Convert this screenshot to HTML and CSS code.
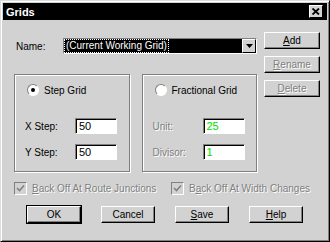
FILE: index.html
```html
<!DOCTYPE html>
<html lang="en">
  <head>
    <meta charset="utf-8" />
    <link rel="stylesheet" href="styles.css">
  </head>
  <body>
    <div class="window">
      <div class="titlebar">
        <span class="title">Grids</span>
        <button class="close">
          <svg width="8" height="7" viewBox="0 0 8 7"><path d="M0.5 0.5 L7 6.5 M7 0.5 L0.5 6.5" stroke="#000" stroke-width="1.8"/></svg>
        </button>
      </div>

      <div class="content">
        <div class="main">
          <div class="nameRow">
            <span class="nameLabel">Name:</span>
            <div class="combo">
              <div class="comboText"><span class="focus">(Current Working Grid)</span></div>
              <div class="comboBtn">
                <svg width="7" height="4" viewBox="0 0 7 4"><path d="M0 0 H7 L3.5 4 Z" fill="#000"/></svg>
              </div>
            </div>
          </div>

          <div class="groups">
            <div class="group">
              <div class="radioRow">
                <span class="radio checked"></span>
                <span>Step Grid</span>
              </div>
              <div class="field">
                <span class="fieldLabel">X Step:</span>
                <div class="input">50</div>
              </div>
              <div class="field">
                <span class="fieldLabel">Y Step:</span>
                <div class="input">50</div>
              </div>
            </div>
            <div class="group">
              <div class="radioRow">
                <span class="radio"></span>
                <span>Fractional Grid</span>
              </div>
              <div class="field">
                <span class="fieldLabel disabled">Unit:</span>
                <div class="input green">25</div>
              </div>
              <div class="field">
                <span class="fieldLabel disabled">Divisor:</span>
                <div class="input green">1</div>
              </div>
            </div>
          </div>
        </div>

        <div class="side">
          <button class="btn"><u>A</u>dd</button>
          <button class="btn disabled"><u>R</u>ename</button>
          <button class="btn disabled"><u>D</u>elete</button>
        </div>
      </div>

      <div class="checks">
        <div class="check first">
          <span class="box">
            <svg width="9" height="9" viewBox="0 0 9 9"><path d="M1 4 L3.5 6.5 L8 1.5" stroke="#808080" stroke-width="1.6" fill="none"/></svg>
          </span>
          <span class="disabled"><u>B</u>ack Off At Route Junctions</span>
        </div>
        <div class="check">
          <span class="box">
            <svg width="9" height="9" viewBox="0 0 9 9"><path d="M1 4 L3.5 6.5 L8 1.5" stroke="#808080" stroke-width="1.6" fill="none"/></svg>
          </span>
          <span class="disabled">B<u>a</u>ck Off At Width Changes</span>
        </div>
      </div>

      <div class="buttons">
        <button class="btn wide default">OK</button>
        <button class="btn wide">Cancel</button>
        <button class="btn wide"><u>S</u>ave</button>
        <button class="btn wide"><u>H</u>elp</button>
      </div>
    </div>
  </body>
</html>
```

FILE: styles.css
```css
body {
  margin: 0;
  font-family: "Liberation Sans", Arial, sans-serif;
  font-size: 10px;
  color: #000;
  background: #fff;
}

.window {
  width: 330px;
  height: 242px;
  box-sizing: border-box;
  border: 1px solid;
  border-color: #dcdcdc #000 #000 #dcdcdc;
  box-shadow: inset 1px 1px 0 #fff, inset -1px -1px 0 #808080;
  padding: 2px;
  background: #d2d2d2;
  overflow: hidden;
}

.titlebar {
  height: 17px;
  background: #000;
  display: flex;
  align-items: center;
  justify-content: space-between;
  padding: 0 4px 0 3px;
}
.title {
  color: #fff;
  font-weight: bold;
  font-size: 11px;
}
.close {
  width: 14px;
  height: 13px;
  padding: 0;
  margin: 0;
  display: flex;
  align-items: center;
  justify-content: center;
  background: #d2d2d2;
  border: 1px solid;
  border-color: #fff #000 #000 #fff;
}

.content {
  display: grid;
  grid-template-columns: 243px 56px;
  column-gap: 7px;
  padding: 12px 0 0 11px;
}

.nameRow {
  display: flex;
  align-items: center;
  margin-top: 6px;
  height: 16px;
}
.nameLabel {
  width: 47px;
  padding-left: 2px;
}
.combo {
  flex: 1;
  height: 16px;
  box-sizing: border-box;
  display: flex;
  border: 1px solid;
  border-color: #808080 #fff #fff #808080;
  background: #000;
}
.comboText {
  flex: 1;
  padding: 1px;
  display: flex;
  align-items: center;
}
.focus {
  color: #fff;
  outline: 1px dotted #fff;
  padding: 0 1px;
  line-height: 12px;
}
.comboBtn {
  width: 14px;
  box-sizing: border-box;
  background: #d2d2d2;
  border: 1px solid;
  border-color: #fff #000 #000 #fff;
  display: flex;
  align-items: center;
  justify-content: center;
}

.groups {
  display: flex;
  gap: 12px;
  margin-top: 20px;
}
.group {
  width: 116px;
  height: 98px;
  box-sizing: border-box;
  border: 1px solid #808080;
  box-shadow: 1px 1px 0 #fff, inset 1px 1px 0 #fff;
  padding: 9px 0 0 10px;
}
.radioRow {
  display: flex;
  align-items: center;
  gap: 5px;
  height: 12px;
  margin-left: 2px;
}
.radio {
  width: 10px;
  height: 10px;
  border-radius: 50%;
  background: #fff;
  border: 1px solid;
  border-color: #808080 #fff #fff #808080;
  position: relative;
}
.radio.checked::after {
  content: "";
  position: absolute;
  left: 3px;
  top: 3px;
  width: 4px;
  height: 4px;
  border-radius: 50%;
  background: #000;
}

.field {
  display: flex;
  align-items: center;
  height: 16px;
  margin-top: 10px;
}
.radioRow + .field {
  margin-top: 22px;
}
.fieldLabel {
  width: 50px;
}
.input {
  width: 42px;
  height: 16px;
  box-sizing: border-box;
  background: #fff;
  border: 1px solid;
  border-color: #808080 #fff #fff #808080;
  box-shadow: inset 1px 1px 0 #000;
  padding: 1px 0 0 3px;
  line-height: 13px;
  font-size: 11px;
}
.green {
  color: #00e000;
}

.disabled {
  color: #808080;
  text-shadow: 1px 1px 0 #fff;
}

.side {
  display: flex;
  flex-direction: column;
  gap: 7px;
}
.btn {
  font-family: "Liberation Sans", Arial, sans-serif;
  font-size: 10px;
  height: 17px;
  padding: 0;
  margin: 0;
  background: #d2d2d2;
  border: 1px solid;
  border-color: #fff #000 #000 #fff;
  box-shadow: inset -1px -1px 0 #808080;
  color: #000;
}
.btn.disabled {
  color: #808080;
}

.checks {
  display: flex;
  margin-top: 9px;
  padding-left: 11px;
  height: 14px;
}
.check {
  display: flex;
  align-items: center;
  gap: 5px;
}
.check.first {
  width: 157px;
}
.box {
  width: 11px;
  height: 11px;
  background: #d2d2d2;
  border: 1px solid;
  border-color: #808080 #fff #fff #808080;
  display: flex;
  align-items: center;
  justify-content: center;
}

.buttons {
  display: flex;
  padding-left: 24px;
  margin-top: 11px;
  gap: 20px;
}
.btn.wide {
  width: 54px;
}
.btn.default {
  outline: 1px solid #000;
}
```
